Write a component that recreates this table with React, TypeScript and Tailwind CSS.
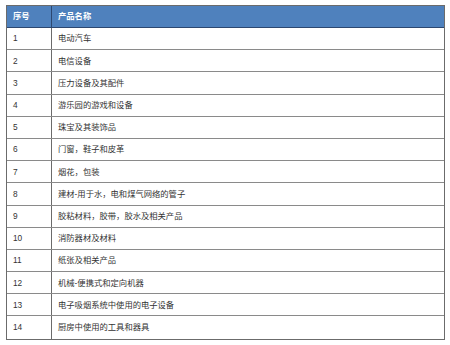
import React from "react";

const rows: [string, string][] = [
  ["1", "电动汽车"],
  ["2", "电信设备"],
  ["3", "压力设备及其配件"],
  ["4", "游乐园的游戏和设备"],
  ["5", "珠宝及其装饰品"],
  ["6", "门窗，鞋子和皮革"],
  ["7", "烟花，包装"],
  ["8", "建材-用于水，电和煤气网络的管子"],
  ["9", "胶粘材料，胶带，胶水及相关产品"],
  ["10", "消防器材及材料"],
  ["11", "纸张及相关产品"],
  ["12", "机械-便携式和定向机器"],
  ["13", "电子吸烟系统中使用的电子设备"],
  ["14", "厨房中使用的工具和器具"],
];

export default function App() {
  return (
    <div
      className="w-[450px] h-[345px] bg-white pt-[5px] pl-[6px]"
      style={{ fontFamily: '"Liberation Sans", "Noto Sans CJK SC", sans-serif' }}
    >
      <div className="w-[439px] border border-[#6b6b6b] text-[8.3px] leading-none text-[#333]">
        <div className="grid grid-cols-[45px_1fr] h-[22px] bg-[#4f81bd] border-b border-[#2c4770] text-white font-bold">
          <div className="flex items-center pl-[6px] border-r border-[#2c4770]">序号</div>
          <div className="flex items-center pl-[6px]">产品名称</div>
        </div>
        {rows.map(([n, name], i) => (
          <div
            key={n}
            className={
              "grid grid-cols-[45px_1fr] h-[22.2px] " +
              (i < rows.length - 1 ? "border-b border-[#8a8a8a]" : "")
            }
          >
            <div className="flex items-center pl-[6px] border-r border-[#6b6b6b]">{n}</div>
            <div className="flex items-center pl-[6px]">{name}</div>
          </div>
        ))}
      </div>
    </div>
  );
}
